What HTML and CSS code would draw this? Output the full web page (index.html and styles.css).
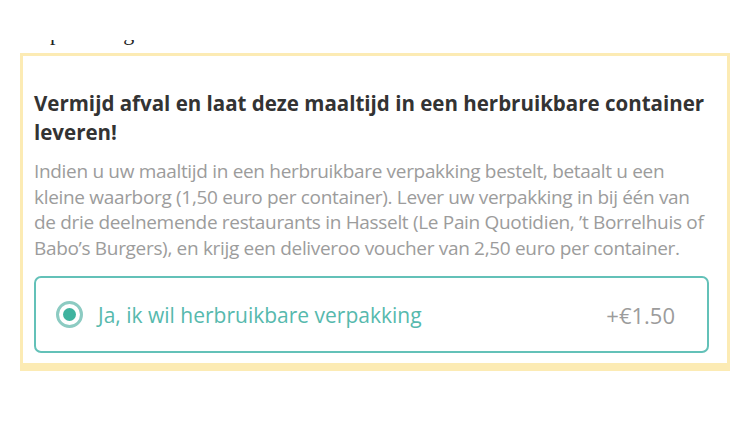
FILE: index.html
```html
<!DOCTYPE html>
<html lang="nl">
<head>
<meta charset="utf-8">
<link rel="stylesheet" href="styles.css">
</head>
<body>
<div class="cut"><span class="cut-text">Opmerking</span></div>
<section class="card">
  <h2 class="title">Vermijd afval en laat deze maaltijd in een herbruikbare container leveren!</h2>
  <p class="desc">Indien u uw maaltijd in een herbruikbare verpakking bestelt, betaalt u een kleine waarborg (1,50 euro per container). Lever uw verpakking in bij één van de drie deelnemende restaurants in Hasselt (Le Pain Quotidien, ’t Borrelhuis of Babo’s Burgers), en krijg een deliveroo voucher van 2,50 euro per container.</p>
  <label class="option">
    <span class="radio"><span class="dot"></span></span>
    <span class="label">Ja, ik wil herbruikbare verpakking</span>
    <span class="price">+€1.50</span>
  </label>
</section>
</body>
</html>
```
FILE: styles.css
```css
html, body {
  margin: 0;
  padding: 0;
  background: #ffffff;
}
body {
  font-family: "Open Sans", "Noto Sans", sans-serif;
  display: flow-root;
}
.cut {
  display: flow-root;
  height: 6px;
  margin-top: 40px;
  overflow: hidden;
  padding-left: 34px;
}
.cut-text {
  display: block;
  font-family: "Liberation Serif", serif;
  font-size: 22px;
  line-height: 22px;
  margin-top: -18px;
  color: #222;
}
.card {
  margin: 7px 20px 0 20px;
  border: 3px solid #fcebb4;
  border-bottom-width: 8px;
  padding: 33px 18px 10px 11px;
}
.title {
  margin: 0;
  font-size: 20.5px;
  line-height: 29px;
  font-weight: 700;
  color: #333333;
}
.desc {
  margin: 12px 0 0 0;
  font-size: 19px;
  line-height: 25.5px;
  letter-spacing: -0.32px;
  color: #9c9c9c;
}
.option {
  margin-top: 15px;
  height: 73px;
  border: 2px solid #63c1b8;
  border-radius: 7px;
  display: flex;
  align-items: center;
  padding: 0 32px 0 20px;
}
.radio {
  width: 21px;
  height: 21px;
  border: 3px solid #8ccbc2;
  border-radius: 50%;
  display: flex;
  align-items: center;
  justify-content: center;
  flex-shrink: 0;
}
.dot {
  width: 13px;
  height: 13px;
  border-radius: 50%;
  background: #3fb39f;
}
.label {
  margin-left: 15px;
  font-size: 21px;
  color: #56b9ad;
  flex: 1;
}
.price {
  font-size: 22px;
  color: #9c9c9c;
}
```
